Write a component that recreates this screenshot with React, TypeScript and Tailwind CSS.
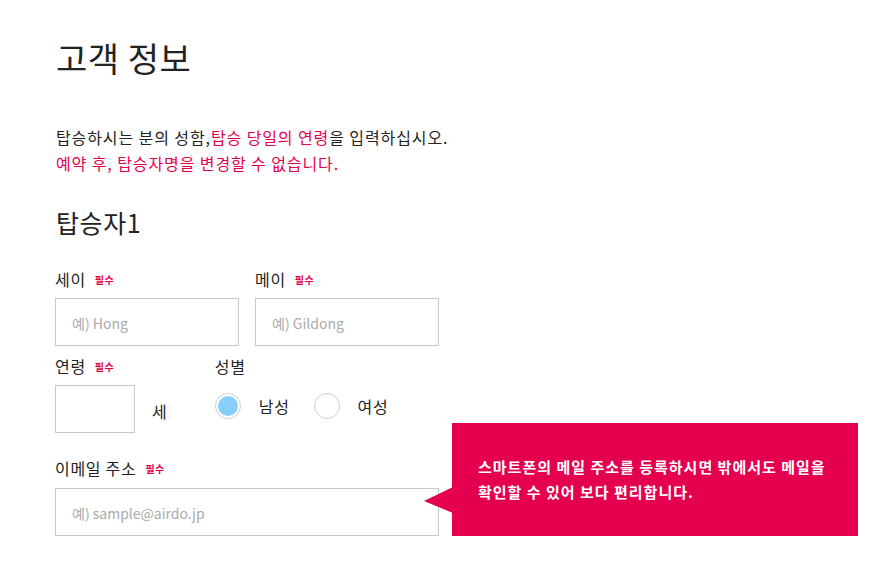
import React from "react";

const font = { fontFamily: '"Noto Sans CJK KR", "Noto Sans", sans-serif' };

function Req() {
  return <span className="ml-[9px] text-[10px] font-bold leading-none tracking-[0.5px] text-[#e5004f] translate-y-[1px]">필수</span>;
}

function Label({ children, req = true }: { children: React.ReactNode; req?: boolean }) {
  return (
    <div className="flex h-[22px] items-center text-[16px] tracking-[0.7px] text-[#222]">
      <span>{children}</span>
      {req && <Req />}
    </div>
  );
}

function Field({ placeholder, className }: { placeholder?: string; className: string }) {
  return (
    <input
      placeholder={placeholder}
      className={`h-[48px] border border-[#c8c8c8] bg-white px-4 pt-[2px] text-[14px] text-[#333] outline-none placeholder:text-[#aaa] ${className}`}
      style={font}
    />
  );
}

function Radio({ checked, label }: { checked?: boolean; label: string }) {
  return (
    <label className="flex items-center">
      <span className="flex h-[26px] w-[26px] items-center justify-center rounded-full border border-[#cfcfcf] bg-white">
        {checked && <span className="h-[20px] w-[20px] rounded-full bg-[#87cefa]" />}
      </span>
      <span className="ml-[18px] text-[16px] tracking-[0.7px] text-[#222]">{label}</span>
    </label>
  );
}

export default function App() {
  return (
    <div className="relative min-h-[579px] w-[884px] bg-white px-[55px] pt-[38px]" style={font}>
      <h1 className="pl-[1px] text-[34px] font-normal leading-[40px] tracking-[0.5px] text-[#222]">고객 정보</h1>

      <p className="mt-[46px] pl-[1px] text-[16px] leading-[26px] tracking-[0.9px] text-[#222]">
        탑승하시는 분의 성함,<span className="text-[#e5004f]">탑승 당일의 연령</span>을 입력하십시오.
        <br />
        <span className="text-[#e5004f]">예약 후, 탑승자명을 변경할 수 없습니다.</span>
      </p>

      <h2 className="mt-[30px] pl-[1px] text-[25px] font-normal leading-[32px] tracking-[0.6px] text-[#222]">탑승자1</h2>

      <div className="mt-[30px] flex gap-[16px]">
        <div className="flex flex-col">
          <Label>세이</Label>
          <Field placeholder="예) Hong" className="mt-[8px] w-[184px]" />
        </div>
        <div className="flex flex-col">
          <Label>메이</Label>
          <Field placeholder="예) Gildong" className="mt-[8px] w-[184px]" />
        </div>
      </div>

      <div className="mt-[9px] flex gap-[48px]">
        <div className="flex flex-col">
          <Label>연령</Label>
          <div className="mt-[8px] flex items-center">
            <Field className="w-[80px]" />
            <span className="ml-[17px] mt-[3px] text-[16px] text-[#222]">세</span>
          </div>
        </div>
        <div className="flex flex-col">
          <Label req={false}>성별</Label>
          <div className="mt-[8px] flex h-[48px] items-center gap-[24px] pb-[6px]">
            <Radio checked label="남성" />
            <Radio label="여성" />
          </div>
        </div>
      </div>

      <div className="mt-[24px] flex flex-col">
        <Label>이메일 주소</Label>
        <Field placeholder="예) sample@airdo.jp" className="mt-[9px] w-[384px]" />
      </div>

      <div className="absolute left-[452px] top-[423px] h-[113px] w-[406px] bg-[#e5004f] pl-[26px] pt-[31px] text-[15px] font-bold leading-[25px] tracking-[1px] text-white">
        <svg className="absolute left-[-28px] top-[64px]" width="29" height="26" viewBox="0 0 29 26">
          <polygon points="29,0 0,14 29,26" fill="#e5004f" />
        </svg>
        스마트폰의 메일 주소를 등록하시면 밖에서도 메일을
        <br />
        확인할 수 있어 보다 편리합니다.
      </div>
    </div>
  );
}
